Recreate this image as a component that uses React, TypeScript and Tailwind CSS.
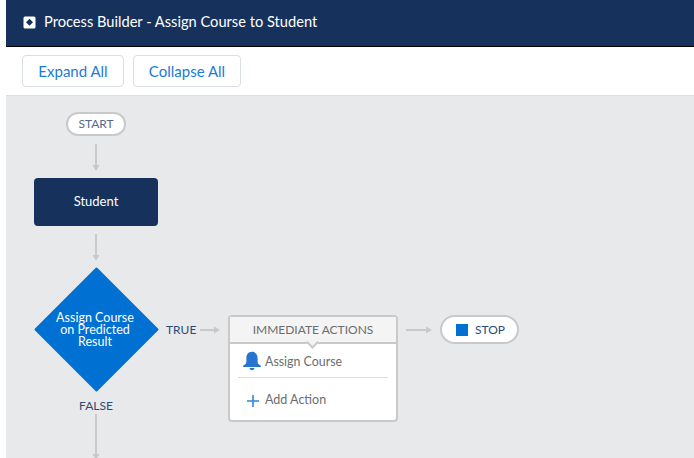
const font = { fontFamily: '"Lato", "Open Sans", sans-serif' };

function VArrow({ x, y, h }: { x: number; y: number; h: number }) {
  return (
    <svg className="absolute" style={{ left: x - 5, top: y }} width="10" height={h} viewBox={`0 0 10 ${h}`}>
      <path d={`M5 0V${h - 4}`} stroke="#c9c9c9" strokeWidth="2" fill="none" />
      <path d={`M1.5 ${h - 6}H8.5L5 ${h}Z`} fill="#c9c9c9" />
    </svg>
  );
}

function HArrow({ x, y, w }: { x: number; y: number; w: number }) {
  return (
    <svg className="absolute" style={{ left: x, top: y - 5 }} width={w} height="10" viewBox={`0 0 ${w} 10`}>
      <path d={`M0 5H${w - 4}`} stroke="#c9c9c9" strokeWidth="2" fill="none" />
      <path d={`M${w - 6} 1.5V8.5L${w} 5Z`} fill="#c9c9c9" />
    </svg>
  );
}

export default function App() {
  return (
    <div className="w-[694px] h-[458px] overflow-hidden bg-white pl-[6px] flex flex-col" style={font}>
      <header className="h-[47px] shrink-0 bg-[#16325c] border-b border-black flex items-center pl-[17px] gap-[8px] text-white text-[14.65px]">
        <svg width="13" height="13" viewBox="0 0 13 13" className="-mt-[2px]">
          <rect x="0.5" y="0.5" width="12" height="12" rx="1.5" fill="#fff" />
          <path d="M6.5 2.8L10 6.2L6.5 9.8L3 6.2Z" fill="#16325c" />
          <rect x="5" y="5.4" width="3" height="1.8" fill="#16325c" />
        </svg>
        <span className="leading-none -mt-[2px]">Process Builder - Assign Course to Student</span>
      </header>
      <div className="h-[49px] shrink-0 bg-white border-b border-[#d8dde6] flex items-center pl-[16px] gap-[9px]">
        <button className="h-[32px] w-[102px] pt-[1px] rounded border border-[#d8dde6] bg-white text-[#1b7bd6] text-[15px]">Expand All</button>
        <button className="h-[32px] w-[108px] pt-[1px] rounded border border-[#d8dde6] bg-white text-[#1b7bd6] text-[15px]">Collapse All</button>
      </div>
      <main className="relative flex-1 bg-[#e8e9eb]">
        <div className="absolute left-[60px] top-[16px] w-[60px] h-[24px] rounded-full border-2 border-[#c9c9c9] bg-white flex items-center justify-center text-[12px] text-[#54698d]">START</div>
        <VArrow x={90} y={48} h={27} />

        <div className="absolute left-[28px] top-[82px] w-[124px] h-[48px] rounded bg-[#16325c] text-white text-[13px] flex items-center justify-center">Student</div>
        <VArrow x={90} y={138} h={27} />

        <svg className="absolute left-[28px] top-[171px]" width="125" height="125" viewBox="0 0 125 125">
          <path d="M62.5 1.5L123.5 62.5L62.5 123.5L1.5 62.5Z" fill="#0070d2" stroke="#0070d2" strokeWidth="2" strokeLinejoin="round" />
        </svg>
        <div className="absolute left-[26px] top-[216px] w-[126px] text-center text-white text-[12.5px] leading-[12px]">
          Assign Course<br />on Predicted<br />Result
        </div>

        <div className="absolute left-[160px] top-[227px] text-[12px] leading-[14px] text-[#2c4a76]">TRUE</div>
        <HArrow x={194} y={234} w={20} />

        <div className="absolute left-[222px] top-[219px] w-[170px] h-[107px] rounded border-2 border-[#c9c9c9] bg-white">
          <div className="relative h-[27px] bg-[#f4f4f4] border-b-2 border-[#c9c9c9] flex items-center justify-center text-[12px] text-[#6b6d70]">
            IMMEDIATE ACTIONS
            <div className="absolute left-[78px] top-[21px] w-[9px] h-[9px] rotate-45 bg-[#f4f4f4] border-r-2 border-b-2 border-[#c9c9c9]" />
          </div>
          <div className="flex items-center h-[33px] pl-[12px] pt-[1px] gap-[3px] text-[12.4px] text-[#6b6d70]">
            <svg width="20" height="20" viewBox="0 0 20 20">
              <path d="M10 0.8C13.6 0.8 15.6 3.6 15.6 7V10.5C15.6 12.6 16.8 13.6 18.6 14.6C19.2 15 19 16 18.2 16H1.8C1 16 .8 15 1.4 14.6C3.2 13.6 4.4 12.6 4.4 10.5V7C4.4 3.6 6.4 .8 10 .8Z" fill="#2574cf" />
              <path d="M7.5 17H12.5C12.2 18.5 11.2 19.2 10 19.2S7.8 18.5 7.5 17Z" fill="#2574cf" />
            </svg>
            <span className="pt-[3px]">Assign Course</span>
          </div>
          <div className="h-px bg-[#d8dde6] mx-[8px]" />
          <div className="flex items-center h-[44px] pl-[17px] pt-[1px] gap-[6px] text-[12.5px] text-[#6b6d70]">
            <svg width="12" height="12" viewBox="0 0 12 12">
              <path d="M6 0V12M0 6H12" stroke="#2d87dc" strokeWidth="1.6" />
            </svg>
            <span>Add Action</span>
          </div>
        </div>

        <HArrow x={400} y={234} w={26} />
        <div className="absolute left-[434px] top-[219px] w-[79px] h-[29px] rounded-full border-2 border-[#c9c9c9] bg-white flex items-center pl-[14px] gap-[7px] text-[12px] text-[#2c4a76]">
          <span className="w-[12px] h-[12px] bg-[#0070d2]" />
          <span>STOP</span>
        </div>

        <div className="absolute left-[60px] top-[303px] w-[60px] text-center text-[12px] leading-[14px] text-[#2c4a76]">FALSE</div>
        <VArrow x={90} y={318} h={46} />
      </main>
    </div>
  );
}
